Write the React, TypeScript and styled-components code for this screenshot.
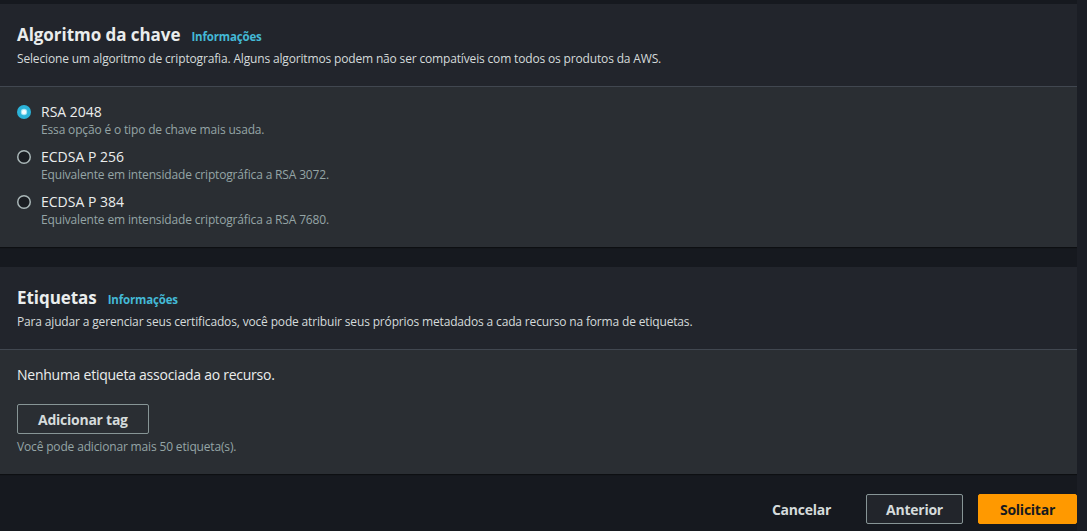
import styled, { createGlobalStyle } from "styled-components";

const GlobalStyle = createGlobalStyle`
  html, body {
    margin: 0;
    padding: 0;
    background: #16191f;
    font-family: "Open Sans", "Noto Sans", sans-serif;
    color: #d5dbdb;
    letter-spacing: -0.01em;
  }
`;

const Page = styled.div`
  display: flex;
  width: 1087px;
  height: 531px;
  overflow: hidden;
`;

const Main = styled.main`
  flex: 1;
  display: flex;
  flex-direction: column;
  gap: 20px;
  padding-top: 4px;
`;

const Scrollbar = styled.div`
  width: 10px;
  background: #1b1e25;
`;

const Container = styled.section`
  background: #2a2e33;
  box-shadow: 0 1px 1px rgba(0, 0, 0, 0.4);
`;

const Header = styled.header`
  background: #22252c;
  padding: 20px 17px 19px;
  border-bottom: 1px solid #414750;

  & > p {
    margin: 5px 0 0;
    font-size: 12px;
    line-height: 16px;
    color: #d5dbdb;
  }
`;

const TitleRow = styled.div`
  display: flex;
  align-items: baseline;
  gap: 11px;

  & > h2 {
    margin: 0;
    font-size: 17px;
    line-height: 22px;
    font-weight: 700;
    letter-spacing: -0.05px;
    color: #eaeded;
  }
`;

const InfoLink = styled.a`
  font-size: 11.5px;
  font-weight: 700;
  color: #44b9d6;
  text-decoration: none;
`;

const Body = styled.div`
  padding: 15px 17px 19px;
  display: flex;
  flex-direction: column;
  align-items: flex-start;
`;

const RadioList = styled.div`
  display: flex;
  flex-direction: column;
  gap: 9px;
`;

const Option = styled.label`
  display: grid;
  grid-template-columns: 14px auto;
  column-gap: 10px;
  align-items: center;

  & > strong {
    font-size: 14px;
    line-height: 20px;
    font-weight: 400;
    letter-spacing: 0;
    color: #eaeded;
  }

  & > small {
    grid-column: 2;
    font-size: 12px;
    line-height: 16px;
    color: #95a5a6;
  }
`;

const Text = styled.p`
  margin: 0;
  font-size: 14px;
  line-height: 20px;
  letter-spacing: -0.25px;
  color: #eaeded;
`;

const Hint = styled.p`
  margin: 5px 0 0;
  font-size: 12px;
  line-height: 16px;
  color: #95a5a6;
`;

const Button = styled.button<{ $variant?: "normal" | "primary" | "link" }>`
  box-sizing: border-box;
  height: 30px;
  padding: 0 ${(p) => (p.$variant === "primary" ? 21 : 19)}px;
  font-family: inherit;
  font-size: 14px;
  font-weight: 700;
  letter-spacing: -0.25px;
  border-radius: 2px;
  cursor: pointer;
  border: 1px solid
    ${(p) => (p.$variant === "primary" ? "#ff9900" : p.$variant === "link" ? "transparent" : "#879596")};
  background: ${(p) => (p.$variant === "primary" ? "#ff9900" : p.$variant === "link" ? "transparent" : "#22252b")};
  color: ${(p) => (p.$variant === "primary" ? "#16191f" : "#d5dbdb")};
`;

const TagButton = styled(Button)`
  margin-top: 19px;
  padding: 0 20px;
  background: #2a2e33;
`;

const Footer = styled.footer`
  display: flex;
  justify-content: flex-end;
  align-items: center;
  gap: 15px;
`;

function Radio({ checked }: { checked?: boolean }) {
  return (
    <svg width="14" height="14" viewBox="0 0 14 14">
      {checked ? (
        <>
          <circle cx="7" cy="7" r="7" fill="#2bb3d9" />
          <circle cx="7" cy="7" r="3.2" fill="#9fe3f3" />
          <circle cx="7" cy="7" r="2.2" fill="#f4fcfe" />
        </>
      ) : (
        <circle cx="7" cy="7" r="6.25" fill="#1a1d22" stroke="#aab7b8" strokeWidth="1.5" />
      )}
    </svg>
  );
}

const options = [
  { name: "RSA 2048", desc: "Essa opção é o tipo de chave mais usada.", checked: true },
  { name: "ECDSA P 256", desc: "Equivalente em intensidade criptográfica a RSA 3072." },
  { name: "ECDSA P 384", desc: "Equivalente em intensidade criptográfica a RSA 7680." },
];

export default function App() {
  return (
    <>
      <GlobalStyle />
      <Page>
        <Main>
          <Container>
            <Header>
              <TitleRow>
                <h2>Algoritmo da chave</h2>
                <InfoLink href="#">Informações</InfoLink>
              </TitleRow>
              <p>
                Selecione um algoritmo de criptografia. Alguns algoritmos podem não ser compatíveis com todos os
                produtos da AWS.
              </p>
            </Header>
            <Body>
              <RadioList>
                {options.map((o) => (
                  <Option key={o.name}>
                    <Radio checked={o.checked} />
                    <strong>{o.name}</strong>
                    <small>{o.desc}</small>
                  </Option>
                ))}
              </RadioList>
            </Body>
          </Container>

          <Container>
            <Header>
              <TitleRow>
                <h2>Etiquetas</h2>
                <InfoLink href="#">Informações</InfoLink>
              </TitleRow>
              <p>
                Para ajudar a gerenciar seus certificados, você pode atribuir seus próprios metadados a cada recurso na
                forma de etiquetas.
              </p>
            </Header>
            <Body>
              <Text>Nenhuma etiqueta associada ao recurso.</Text>
              <TagButton>Adicionar tag</TagButton>
              <Hint>Você pode adicionar mais 50 etiqueta(s).</Hint>
            </Body>
          </Container>

          <Footer>
            <Button $variant="link">Cancelar</Button>
            <Button>Anterior</Button>
            <Button $variant="primary">Solicitar</Button>
          </Footer>
        </Main>
        <Scrollbar />
      </Page>
    </>
  );
}
